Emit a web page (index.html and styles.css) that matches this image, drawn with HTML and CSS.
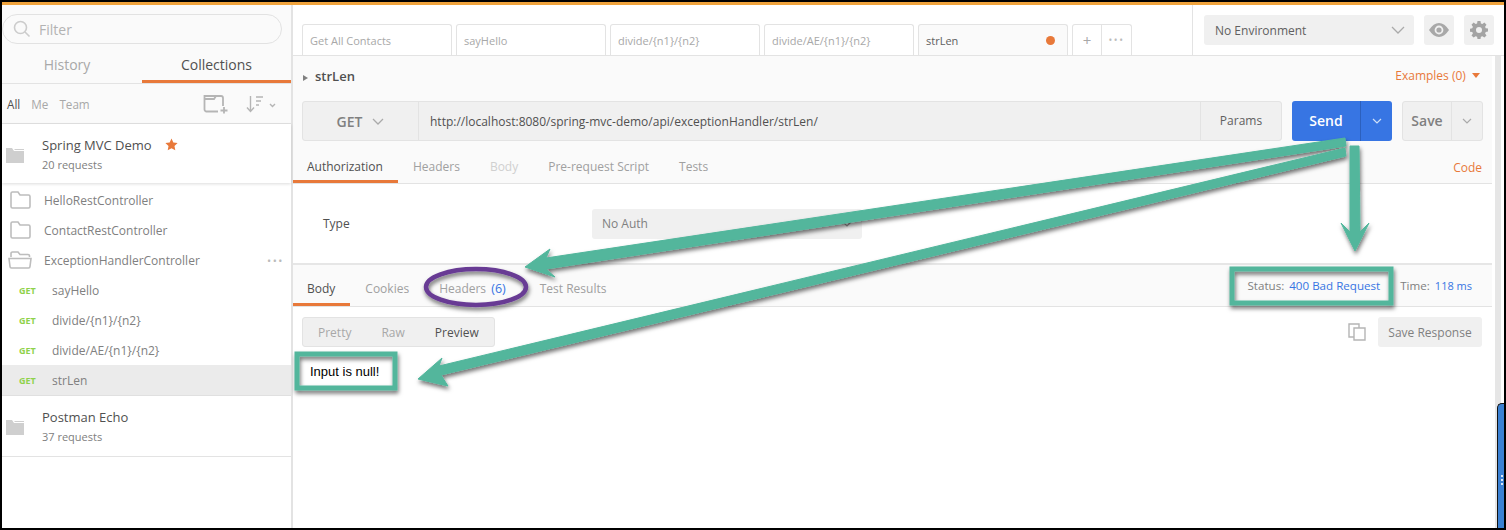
FILE: index.html
```html
<!DOCTYPE html>
<html lang="en">
<head>
  <meta charset="UTF-8" />
  <title>Postman - strLen</title>
  <link rel="stylesheet" href="styles.css">
</head>
<body>
  <div class="app">
    <!-- sidebar -->
    <aside class="sidebar">
      <div class="filter-wrap">
        <div class="filter">
          <svg width="18" height="18" viewBox="0 0 18 18" fill="none" stroke="#ccc" stroke-width="1.6"><circle cx="7.5" cy="7.5" r="6"/><path d="M12 12l4.5 4.5"/></svg>
          <span>Filter</span>
        </div>
      </div>
      <div class="side-tabs">
        <div class="side-tab">History</div>
        <div class="side-tab active">Collections</div>
      </div>
      <div class="scope">
        <span class="on">All</span><span>Me</span><span>Team</span>
        <svg class="new-coll" width="26" height="20" viewBox="0 0 26 20" fill="none" stroke="#b5b5b5" stroke-width="1.8"><path d="M15 17.5H3.5a2 2 0 0 1-2-2V2h16.500a2 2 0 0 1 2 2v8"/><path d="M2 5h9l2-3"/><path d="M21 13v6.500M17.500 16.500h7"/></svg>
        <svg class="sorter" width="30" height="18" viewBox="0 0 30 18" fill="none" stroke="#b5b5b5" stroke-width="1.4"><path d="M4.500 1v15M1 12.500l3.500 4 3.500-4"/><path d="M10 2h7M10 6h5M10 10h3"/><path d="M24 9l2.500 2.500L29 9"/></svg>
      </div>

      <div class="coll">
        <svg class="coll-icon" width="18" height="15" viewBox="0 0 18 15" fill="#cfcfcf"><path d="M0 0h6l2 3h10v12H0z"/><path d="M8 1h10v1H9z"/></svg>
        <div>
          <div class="coll-name">Spring MVC Demo <svg class="star" width="13" height="13" viewBox="0 0 24 24" fill="#e8793a"><path d="M12 1l3.400 7.300 7.900 1-5.800 5.400 1.500 7.900-7-3.900-7 3.900 1.500-7.900L.7 9.300l7.900-1z"/></svg></div>
          <div class="coll-count">20 requests</div>
        </div>
      </div>

      <div class="tree">
        <div class="row">
          <svg class="fld" width="22" height="18" viewBox="0 0 22 18" fill="none" stroke="#bdbdbd" stroke-width="1.6"><path d="M2 2.500A1.500 1.500 0 0 1 3.500 1H9l2 3h8.500A1.500 1.500 0 0 1 21 5.500v10a1.500 1.500 0 0 1-1.500 1.500h-16A1.500 1.500 0 0 1 2 15.500z"/></svg>
          <span>HelloRestController</span>
        </div>
        <div class="row">
          <svg class="fld" width="22" height="18" viewBox="0 0 22 18" fill="none" stroke="#bdbdbd" stroke-width="1.6"><path d="M2 2.500A1.500 1.500 0 0 1 3.500 1H9l2 3h8.500A1.500 1.500 0 0 1 21 5.500v10a1.500 1.500 0 0 1-1.500 1.500h-16A1.500 1.500 0 0 1 2 15.500z"/></svg>
          <span>ContactRestController</span>
        </div>
        <div class="row">
          <svg class="fld" width="24" height="18" viewBox="0 0 24 18" fill="none" stroke="#bdbdbd" stroke-width="1.6"><path d="M3 6V2.500A1.500 1.500 0 0 1 4.500 1H10l2 2.500h8A1.500 1.500 0 0 1 21.500 5v1"/><path d="M1 7.500h22l-1 8a1.500 1.500 0 0 1-1.500 1.500h-17A1.500 1.500 0 0 1 2 15.500z"/></svg>
          <span>ExceptionHandlerController</span>
          <span class="dots">•••</span>
        </div>
        <div class="row req"><b>GET</b><span>sayHello</span></div>
        <div class="row req"><b>GET</b><span>divide/{n1}/{n2}</span></div>
        <div class="row req"><b>GET</b><span>divide/AE/{n1}/{n2}</span></div>
        <div class="row req current"><b>GET</b><span>strLen</span></div>
      </div>

      <div class="coll plain">
        <svg class="coll-icon" width="18" height="15" viewBox="0 0 18 15" fill="#cfcfcf"><path d="M0 0h6l2 3h10v12H0z"/><path d="M8 1h10v1H9z"/></svg>
        <div>
          <div class="coll-name">Postman Echo</div>
          <div class="coll-count">37 requests</div>
        </div>
      </div>
    </aside>

    <!-- main area -->
    <main class="main">
      <div class="topbar">
        <div class="tabs">
          <div class="tab">Get All Contacts</div>
          <div class="tab">sayHello</div>
          <div class="tab">divide/{n1}/{n2}</div>
          <div class="tab">divide/AE/{n1}/{n2}</div>
          <div class="tab current">strLen<i class="dot"></i></div>
          <div class="tab-tools"><span class="plus">+</span><span class="more">•••</span></div>
        </div>
        <div class="env-area">
          <div class="env">No Environment
            <svg width="14" height="8" viewBox="0 0 14 8" fill="none" stroke="#aaa" stroke-width="1.3"><path d="M1 1l6 6 6-6"/></svg>
          </div>
          <div class="env-btn">
            <svg width="20" height="14" viewBox="0 0 20 14"><path d="M0 7c3-4.500 6.300-7 10-7s7 2.500 10 7c-3 4.500-6.300 7-10 7S3 11.500 0 7z" fill="#a8a8a8"/><circle cx="10" cy="7" r="4.400" fill="#f0f0f0"/><circle cx="10" cy="7" r="2.600" fill="#a8a8a8"/></svg>
          </div>
          <div class="env-btn">
            <svg width="18" height="18" viewBox="0 0 18 18" fill="#a3a3a3"><path d="M7.500 0h3l.4 2.400 1.500.6 2-1.400 2.100 2.100-1.400 2 .6 1.500 2.300.4v3l-2.300.4-.6 1.500 1.400 2-2.100 2.100-2-1.400-1.500.6-.4 2.200h-3l-.4-2.200-1.500-.6-2 1.400L1.500 14.600l1.400-2-.6-1.500L0 10.700v-3l2.300-.4.6-1.500-1.400-2L3.600 1.600l2 1.400 1.500-.6zM9 6a3 3 0 1 0 0 6 3 3 0 0 0 0-6z"/></svg>
          </div>
        </div>
      </div>

      <div class="pane">
        <div class="pane-main">
          <div class="builder">
            <div class="req-title">
              <div class="name"><i class="caret"></i>strLen</div>
              <div class="examples">Examples (0) <i class="down"></i></div>
            </div>
            <div class="url-row">
              <div class="url-box">
                <div class="method">GET
                  <svg width="12" height="7" viewBox="0 0 12 7" fill="none" stroke="#aaa" stroke-width="1.3"><path d="M1 1l5 5 5-5"/></svg>
                </div>
                <div class="url">http://localhost:8080/spring-mvc-demo/api/exceptionHandler/strLen/</div>
                <div class="params">Params</div>
              </div>
              <div class="send">
                <span class="send-main">Send</span>
                <span class="send-drop"><svg width="10" height="6" viewBox="0 0 10 6" fill="none" stroke="#cfe0f7" stroke-width="1.2"><path d="M1 1l4 4 4-4"/></svg></span>
              </div>
              <div class="save">
                <span class="save-main">Save</span>
                <span class="save-drop"><svg width="10" height="6" viewBox="0 0 10 6" fill="none" stroke="#aaa" stroke-width="1.2"><path d="M1 1l4 4 4-4"/></svg></span>
              </div>
            </div>
            <div class="sub-tabs">
              <div class="sub-tab active">Authorization</div>
              <div class="sub-tab">Headers</div>
              <div class="sub-tab off">Body</div>
              <div class="sub-tab">Pre-request Script</div>
              <div class="sub-tab">Tests</div>
              <div class="code">Code</div>
            </div>
          </div>

          <div class="auth">
            <div class="auth-label">Type</div>
            <div class="auth-select">No Auth
              <svg width="10" height="6" viewBox="0 0 10 6" fill="none" stroke="#999" stroke-width="1.2"><path d="M1 1l4 4 4-4"/></svg>
            </div>
          </div>

          <div class="res-tabs">
            <div class="sub-tab active">Body</div>
            <div class="sub-tab">Cookies</div>
            <div class="sub-tab res-headers">Headers <em>(6)</em></div>
            <div class="sub-tab">Test Results</div>
            <div class="res-meta">
              <span class="lbl">Status:</span><span class="val">400 Bad Request</span>
              <span class="lbl time">Time:</span><span class="val ms">118 ms</span>
            </div>
          </div>

          <div class="res-tools">
            <div class="seg"><span>Pretty</span><span>Raw</span><span class="on">Preview</span></div>
            <svg class="copy" width="18" height="18" viewBox="0 0 18 18" fill="#fff" stroke="#b5b5b5" stroke-width="1.4"><path d="M1 1h10v13H1z"/><path d="M6 5h11v12H6z"/></svg>
            <div class="save-res">Save Response</div>
          </div>
          <div class="preview">Input is null!</div>
        </div>
        <div class="scrollbar"><div class="track"></div></div>
      </div>
    </main>
  </div>
  <div class="handle"></div>

  <!-- callouts drawn on top of the screenshot -->
  <svg class="marks" width="1506" height="530" viewBox="0 0 1506 530">
    <defs>
      <filter id="sh" x="-10%" y="-10%" width="120%" height="130%">
        <feDropShadow dx="1" dy="3" stdDeviation="2" flood-color="#000" flood-opacity="0.55"/>
      </filter>
    </defs>
    <g filter="url(#sh)">
      <polygon fill="#52b69c" stroke="#52b69c" stroke-linejoin="round" points="1345,138 1346,146 546,269 555,277 525,267 550,249 546,258"/>
      <polygon fill="#52b69c" stroke="#52b69c" stroke-linejoin="round" points="1345,148 1346,156 441,375 448,386 418,379 442,358 439,366"/>
      <polygon fill="#52b69c" stroke="#52b69c" stroke-linejoin="round" points="1350,146 1359,146 1360,232 1369,223 1355,251 1341,223 1350,232"/>
      <ellipse cx="476" cy="287" rx="50" ry="18" fill="none" stroke="#673a94" stroke-width="4.5"/>
      <rect x="1232" y="269" width="159" height="34" fill="none" stroke="#52b69c" stroke-width="5"/>
      <rect x="297" y="354" width="98" height="34" fill="none" stroke="#52b69c" stroke-width="5"/>
    </g>
  </svg>
</body>
</html>
```

FILE: styles.css
```css
* {
  box-sizing: border-box;
}
html, body {
  margin: 0;
  height: 530px;
  overflow: hidden;
}
body {
  position: relative;
  font-family: "Open Sans", "Noto Sans", sans-serif;
  font-size: 12px;
  color: #808080;
  background-color: #fff;
}
.app {
  display: flex;
  height: 530px;
  border: 2px solid #000;
}
.app::before {
  content: "";
  position: absolute;
  left: 2px;
  right: 2px;
  top: 2px;
  height: 3px;
  background-color: #f0a33c;
}

/* sidebar */
.sidebar {
  width: 291px;
  flex: none;
  padding-top: 2px;
  background-color: #fff;
  border-right: 2px solid #e3e3e3;
}
.filter-wrap {
  height: 44px;
  padding: 10px 0 0 0;
  background-color: #fafafa;
}
.filter {
  display: flex;
  align-items: center;
  gap: 8px;
  width: 280px;
  height: 30px;
  padding-left: 10px;
  border: 1px solid #e2e2e2;
  border-radius: 15px;
  background-color: #fafafa;
  color: #b3b3b3;
  font-size: 14px;
}
.side-tabs {
  display: flex;
  height: 36px;
  background-color: #fafafa;
  border-bottom: 1px solid #e3e3e3;
}
.side-tab {
  width: 140px;
  padding-right: 10px;
  text-align: center;
  font-size: 14px;
  line-height: 34px;
  color: #a8a8a8;
}
.side-tab.active {
  width: 149px;
  padding-right: 0;
  color: #505050;
  border-bottom: 3px solid #e8793a;
}
.scope {
  display: flex;
  align-items: center;
  gap: 11px;
  height: 40px;
  padding: 0 8px 0 5px;
  font-size: 11.7px;
  color: #a8a8a8;
  background-color: #fafafa;
  border-bottom: 1px solid #e3e3e3;
}
.scope .on {
  color: #505050;
}
.new-coll {
  margin-left: auto;
}
.sorter {
  margin: 0 7px 0 6px;
}
.coll {
  display: flex;
  align-items: center;
  height: 59px;
  padding: 3px 0 0 4px;
  background-color: #fff;
  box-shadow: 0 1px 3px rgba(0,0,0,0.14);
  position: relative;
}
.coll.plain {
  box-shadow: none;
  border-bottom: 1px solid #e3e3e3;
  height: 61px;
  padding-top: 2px;
}
.coll-icon {
  margin: 0 18px 0 0;
  flex: none;
}
.coll-name {
  font-size: 13px;
  line-height: 20px;
  color: #505050;
}
.star {
  margin-left: 10px;
  vertical-align: -1px;
}
.coll-count {
  font-size: 11px;
  line-height: 20px;
  color: #808080;
}
.tree {
  padding-top: 2px;
}
.row {
  display: flex;
  align-items: center;
  height: 30px;
  padding-left: 6px;
  font-size: 12px;
  color: #808080;
}
.fld {
  flex: none;
  width: 24px;
  margin-right: 12px;
}
.dots {
  margin-left: auto;
  margin-right: 7px;
  font-size: 11px;
  letter-spacing: 1.5px;
  color: #bbb;
}
.req {
  padding-left: 17px;
}
.req b {
  width: 33px;
  flex: none;
  font-size: 9px;
  font-weight: 700;
  color: #8fd24b;
}
.req.current {
  height: 31px;
  background-color: #ebebeb;
  border-bottom: 1px solid #e0e0e0;
}

/* main */
.main {
  flex: 1;
  min-width: 0;
  display: flex;
  flex-direction: column;
}
.topbar {
  display: flex;
  flex: none;
  height: 54px;
  padding-top: 2px;
  background-color: #fff;
  border-bottom: 1px solid #e3e3e3;
}
.tabs {
  display: flex;
  align-items: flex-end;
  gap: 4px;
  width: 899px;
  padding-left: 9px;
}
.tab {
  display: flex;
  align-items: center;
  justify-content: space-between;
  width: 150px;
  height: 31px;
  padding: 0 13px 0 7px;
  border: 1px solid #e3e3e3;
  border-bottom: 0;
  border-radius: 3px 3px 0 0;
  font-size: 11px;
  color: #a8a8a8;
}
.tab.current {
  background-color: #fafafa;
  color: #606060;
  padding-right: 12px;
}
.dot {
  width: 9px;
  height: 9px;
  border-radius: 50%;
  background-color: #e8793a;
}
.tab-tools {
  display: flex;
  height: 31px;
  border: 1px solid #e3e3e3;
  border-bottom: 0;
  border-radius: 3px 3px 0 0;
  color: #a8a8a8;
}
.tab-tools span {
  display: flex;
  align-items: center;
  justify-content: center;
}
.plus {
  width: 29px;
  font-size: 15px;
  border-right: 1px solid #e3e3e3;
}
.more {
  width: 29px;
  font-size: 10px;
  letter-spacing: 1.5px;
  color: #bbb;
}
.env-area {
  display: flex;
  gap: 10px;
  flex: 1;
  padding: 13px 0 0 11px;
  border-left: 1px solid #e3e3e3;
  margin-top: -2px;
}
.env {
  display: flex;
  align-items: center;
  justify-content: space-between;
  width: 210px;
  height: 30px;
  padding: 0 9px 0 11px;
  border-radius: 3px;
  background-color: #f0f0f0;
  font-size: 12px;
  color: #606060;
}
.env-btn {
  display: flex;
  align-items: center;
  justify-content: center;
  width: 30px;
  height: 30px;
  border-radius: 3px;
  background-color: #f0f0f0;
}
.pane {
  flex: 1;
  display: flex;
  min-height: 0;
}
.pane-main {
  flex: 1;
  min-width: 0;
}
.scrollbar {
  flex: none;
  width: 12px;
  padding-left: 3px;
}
.track {
  width: 6px;
  height: 100%;
  background-color: #e6e6e6;
}
.handle {
  position: absolute;
  left: 1497px;
  top: 403px;
  width: 7px;
  height: 125px;
  background-color: #3a80d2;
  border-left: 1px solid #111;
  border-top: 1px solid #111;
  border-radius: 5px 0 0 0;
}
.handle::after {
  content: "";
  position: absolute;
  left: 3px;
  top: 71px;
  width: 2px;
  height: 2px;
  background-color: #dce8f6;
  box-shadow: 0 4px 0 #dce8f6, 0 8px 0 #dce8f6;
}
.builder {
  height: 128px;
  padding: 0 9px;
  background-color: #fafafa;
  border-bottom: 1px solid #e3e3e3;
}
.req-title {
  display: flex;
  align-items: center;
  justify-content: space-between;
  height: 45px;
  padding: 0 3px 6px 0;
}
.name {
  font-size: 13px;
  font-weight: 600;
  color: #505050;
}
.caret {
  display: inline-block;
  margin: 0 7px 0 1px;
  border-left: 5px solid #808080;
  border-top: 3.5px solid transparent;
  border-bottom: 3.5px solid transparent;
}
.examples {
  font-size: 12px;
  color: #e8793a;
}
.down {
  display: inline-block;
  margin-left: 3px;
  vertical-align: 2px;
  border-top: 5px solid #e8793a;
  border-left: 4px solid transparent;
  border-right: 4px solid transparent;
}
.url-row {
  display: flex;
  gap: 10px;
}
.url-box {
  display: flex;
  width: 980px;
  height: 40px;
  border: 1px solid #e3e3e3;
  border-radius: 3px;
  background-color: #f0f0f0;
}
.method {
  display: flex;
  align-items: center;
  justify-content: center;
  gap: 10px;
  width: 116px;
  border-right: 1px solid #e3e3e3;
  font-size: 14px;
  font-weight: 600;
  color: #808080;
}
.url {
  flex: 1;
  align-self: center;
  padding-left: 11px;
  font-size: 12px;
  color: #505050;
}
.params {
  width: 81px;
  border-left: 1px solid #e3e3e3;
  text-align: center;
  line-height: 38px;
  font-size: 12px;
  color: #606060;
}
.send {
  display: flex;
  width: 100px;
  height: 40px;
  border-radius: 3px;
  background-color: #3775e3;
  color: #fff;
  font-size: 14px;
  font-weight: 600;
}
.send-main {
  width: 69px;
  text-align: center;
  line-height: 40px;
  border-right: 1px solid #2c60bd;
}
.send-drop, .save-drop {
  flex: 1;
  display: flex;
  align-items: center;
  justify-content: center;
}
.save {
  display: flex;
  width: 81px;
  height: 40px;
  border: 1px solid #e3e3e3;
  border-radius: 3px;
  background-color: #f0f0f0;
  color: #808080;
  font-size: 14px;
  font-weight: 600;
}
.save-main {
  width: 49px;
  text-align: center;
  line-height: 38px;
  border-right: 1px solid #e3e3e3;
}
.sub-tabs {
  display: flex;
  height: 35px;
  margin: 7px -9px 0;
}
.sub-tab {
  padding: 0 15px;
  line-height: 38px;
  font-size: 12px;
  color: #a0a0a0;
  white-space: nowrap;
}
.sub-tab.active {
  padding-left: 14px;
  color: #505050;
  border-bottom: 3px solid #e8793a;
}
.sub-tab.off {
  color: #d0d0d0;
}
.code {
  margin-left: auto;
  margin-right: 10px;
  line-height: 40px;
  font-size: 12px;
  color: #e8793a;
}
.auth {
  display: flex;
  align-items: center;
  height: 81px;
  padding-left: 30px;
  background-color: #fff;
  border-bottom: 2px solid #e6e6e6;
}
.auth-label {
  width: 269px;
  font-size: 12px;
  color: #505050;
}
.auth-select {
  display: flex;
  align-items: center;
  justify-content: space-between;
  width: 270px;
  height: 30px;
  padding: 0 10px;
  border-radius: 3px;
  background-color: #f0f0f0;
  font-size: 12px;
  color: #808080;
}
.res-tabs {
  display: flex;
  height: 42px;
  padding-top: 3px;
  background-color: #fafafa;
  border-bottom: 1px solid #e3e3e3;
}
.res-tabs .sub-tab {
  height: 38px;
  line-height: 42px;
}
.res-tabs .res-headers {
  padding-right: 19px;
}
.res-tabs .sub-tab em {
  font-style: normal;
  font-size: 12.5px;
  color: #3775e3;
  margin-left: 2px;
}
.res-meta {
  margin-left: auto;
  margin-right: 20px;
  line-height: 35px;
  font-size: 11.6px;
}
.lbl {
  color: #808080;
  margin-right: 5px;
}
.val {
  color: #3775e3;
}
.val.ms {
  font-size: 11px;
}
.lbl.time {
  margin-left: 17px;
}
.res-tools {
  display: flex;
  align-items: center;
  height: 50px;
  padding: 0 10px 0 9px;
}
.seg {
  display: flex;
  align-items: center;
  width: 193px;
  height: 30px;
  padding-left: 15px;
  gap: 30px;
  border: 1px solid #e3e3e3;
  border-radius: 3px;
  background-color: #f0f0f0;
  font-size: 12px;
  color: #a8a8a8;
}
.seg .on {
  color: #505050;
}
.copy {
  margin-left: auto;
  margin-right: 12px;
}
.save-res {
  width: 104px;
  height: 30px;
  border-radius: 3px;
  background-color: #f0f0f0;
  text-align: center;
  line-height: 31px;
  font-size: 12px;
  color: #808080;
}
.preview {
  padding-left: 17px;
  font-family: "Liberation Sans", Arial, sans-serif;
  font-size: 13px;
  line-height: 29px;
  color: #000;
}

/* callouts */
.marks {
  position: absolute;
  left: 0;
  top: 0;
  pointer-events: none;
}
```
